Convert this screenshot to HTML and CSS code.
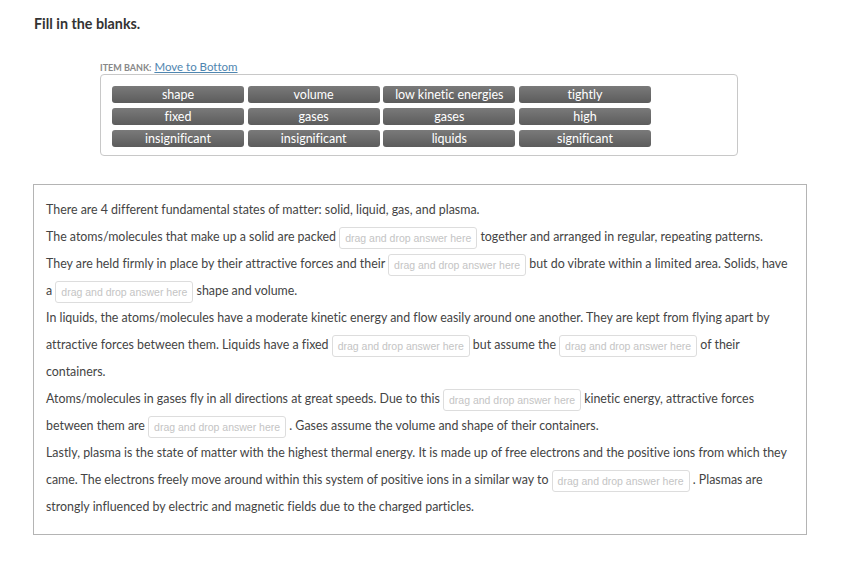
FILE: index.html
```html
<!DOCTYPE html>
<html lang="en">
<head>
<meta charset="utf-8">
<title>Fill in the blanks</title>
<link rel="stylesheet" href="styles.css">
</head>
<body>
<div class="page">
  <h1 class="title">Fill in the blanks.</h1>
  <div class="bank">
    <div class="bank-label"><span class="bank-caption">ITEM BANK:</span> <a class="bank-link" href="#">Move to Bottom</a></div>
    <div class="bank-box">
      <div class="tiles">
        <div class="tile">shape</div>
        <div class="tile">volume</div>
        <div class="tile">low kinetic energies</div>
        <div class="tile">tightly</div>
        <div class="tile">fixed</div>
        <div class="tile">gases</div>
        <div class="tile">gases</div>
        <div class="tile">high</div>
        <div class="tile">insignificant</div>
        <div class="tile">insignificant</div>
        <div class="tile">liquids</div>
        <div class="tile">significant</div>
      </div>
    </div>
  </div>
  <div class="question">
    <p class="para">There are 4 different fundamental states of matter: solid, liquid, gas, and plasma.</p>
    <p class="para">The atoms/molecules that make up a solid are packed <span class="blank">drag and drop answer here</span> together and arranged in regular, repeating patterns.</p>
    <p class="para">They are held firmly in place by their attractive forces and their <span class="blank">drag and drop answer here</span> but do vibrate within a limited area. Solids, have<br>a <span class="blank">drag and drop answer here</span> shape and volume.</p>
    <p class="para">In liquids, the atoms/molecules have a moderate kinetic energy and flow easily around one another. They are kept from flying apart by<br>attractive forces between them. Liquids have a fixed <span class="blank">drag and drop answer here</span> but assume the <span class="blank">drag and drop answer here</span> of their<br>containers.</p>
    <p class="para">Atoms/molecules in gases fly in all directions at great speeds. Due to this <span class="blank">drag and drop answer here</span> kinetic energy, attractive forces<br>between them are <span class="blank">drag and drop answer here</span> . Gases assume the volume and shape of their containers.</p>
    <p class="para">Lastly, plasma is the state of matter with the highest thermal energy. It is made up of free electrons and the positive ions from which they<br>came. The electrons freely move around within this system of positive ions in a similar way to <span class="blank">drag and drop answer here</span> . Plasmas are<br>strongly influenced by electric and magnetic fields due to the charged particles.</p>
  </div>
</div>
</body>
</html>
```

FILE: styles.css
```css
html, body {
  margin: 0;
  padding: 0;
  background: #ffffff;
}
body {
  font-family: Lato, "Noto Sans", "Liberation Sans", sans-serif;
  font-variant-ligatures: none;
  color: #444444;
}
.page {
  padding: 14px 0 0 33px;
}
.title {
  margin: 0 0 0 1px;
  font-size: 14.3px;
  line-height: 20px;
  font-weight: bold;
  color: #333333;
}
.bank {
  margin: 27px 0 0 67px;
  width: 638px;
}
.bank-label {
  font-size: 11.5px;
  line-height: 12px;
  height: 13px;
}
.bank-caption {
  font-size: 9px;
  font-weight: bold;
  color: #888888;
}
.bank-link {
  color: #4f86b0;
  text-decoration: underline;
}
.bank-box {
  border: 1px solid #c8c8c8;
  border-radius: 4px;
  padding: 11px 0 8px 11px;
}
.tiles {
  display: grid;
  grid-template-columns: repeat(4, 132px);
  column-gap: 3.67px;
  row-gap: 5px;
}
.tile {
  height: 17px;
  line-height: 17px;
  border-radius: 3px;
  background: linear-gradient(#7a7a7a, #5c5c5c);
  color: #ffffff;
  font-size: 12.5px;
  text-align: center;
  white-space: nowrap;
}
.question {
  margin-top: 28px;
  box-sizing: border-box;
  width: 774px;
  border: 1px solid #b4b4b4;
  padding: 11px 12px 14px 12px;
}
.para {
  margin: 0;
  font-size: 12.4px;
  line-height: 27px;
  white-space: nowrap;
}
.blank {
  display: inline-block;
  box-sizing: border-box;
  width: 138px;
  height: 22px;
  line-height: 20px;
  border: 1px solid #dddddd;
  border-radius: 3px;
  font-family: "Liberation Sans", Arial, sans-serif;
  font-size: 10.5px;
  color: #c4c4c4;
  text-align: center;
  vertical-align: middle;
}
```
